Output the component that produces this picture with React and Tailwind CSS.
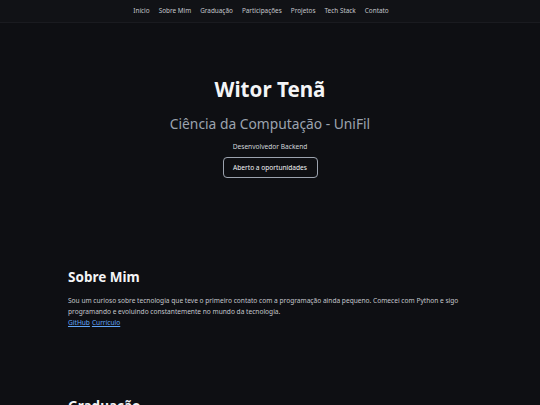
export default function App() {
  const nav = ["Início", "Sobre Mim", "Graduação", "Participações", "Projetos", "Tech Stack", "Contato"];
  return (
    <div className="min-h-[405px] bg-[#0e0f13] text-[#e5e7eb]" style={{ fontFamily: '"Noto Sans", "Open Sans", sans-serif' }}>
      <nav className="h-[23px] bg-[#111216] border-b border-[#1a1b20] flex items-center justify-center gap-[9px] pr-[18px] text-[6.4px] text-[#c4c6cc]">
        {nav.map((n) => (
          <span key={n}>{n}</span>
        ))}
      </nav>
      <section className="flex flex-col items-center pt-[51px] h-[244px]">
        <h1 className="text-[20.6px] font-bold leading-[30px] text-[#f3f4f6]">Witor Tenã</h1>
        <h2 className="mt-[10px] text-[13.8px] leading-[20px] text-[#9ca3af]">Ciência da Computação - UniFil</h2>
        <p className="mt-[8px] text-[6.6px] leading-[10px] text-[#d1d5db]">Desenvolvedor Backend</p>
        <div className="mt-[5px] border border-[#9ca3af] rounded-[4px] w-[95px] h-[21px] flex items-center justify-center text-[6.6px] text-[#f3f4f6]">
          Aberto a oportunidades
        </div>
      </section>
      <section className="px-[68px]">
        <h3 className="text-[13.5px] font-bold leading-[20px] text-[#f3f4f6]">Sobre Mim</h3>
        <p className="mt-[8px] text-[6.6px] leading-[11px] text-[#c4c6cc] max-w-[418px]">
          Sou um curioso sobre tecnologia que teve o primeiro contato com a programação ainda pequeno. Comecei com Python e sigo programando e evoluindo constantemente no mundo da tecnologia.
        </p>
        <div className="text-[6.6px] leading-[11px] text-[#60a5fa] flex gap-[2px]">
          <span className="underline">GitHub</span>
          <span className="underline">Currículo</span>
        </div>
        <h3 className="mt-[68px] text-[13.5px] font-bold leading-[20px] text-[#f3f4f6]">Graduação</h3>
      </section>
    </div>
  );
}
